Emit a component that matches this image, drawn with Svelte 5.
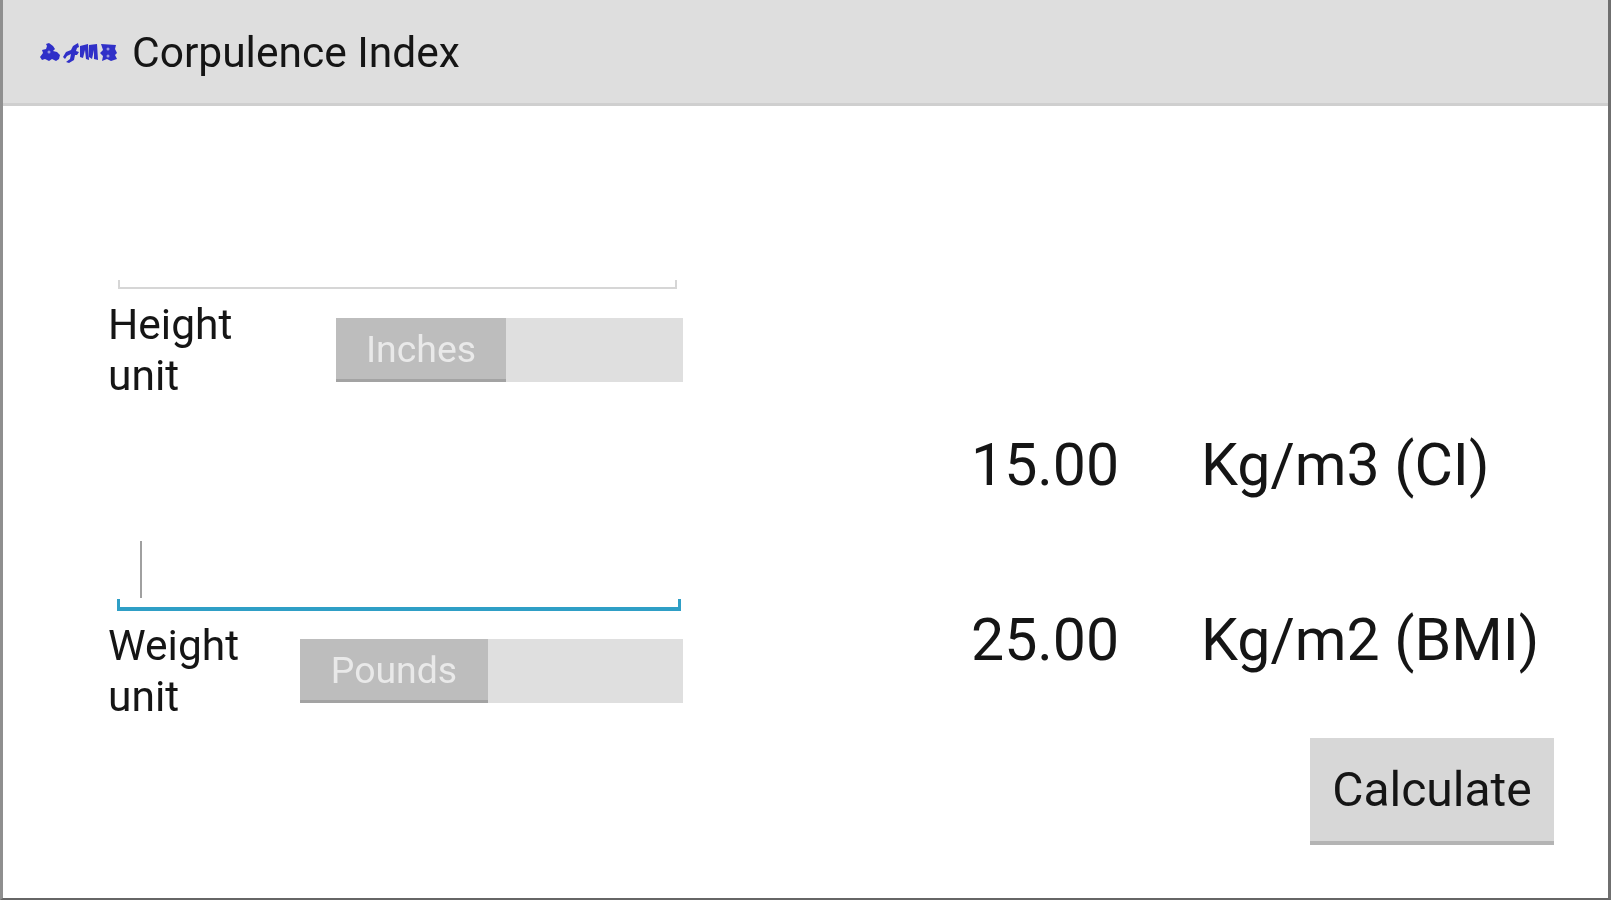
<script>
  const fields = [
    { id: 'height', label: ['Height', 'unit'], value: 'Inches', active: false },
    { id: 'weight', label: ['Weight', 'unit'], value: 'Pounds', active: true }
  ];
  const results = [
    { value: '15.00', unit: 'Kg/m3 (CI)' },
    { value: '25.00', unit: 'Kg/m2 (BMI)' }
  ];
</script>

<div class="screen">
  <header class="bar">
    <svg class="logo" width="80" height="24" viewBox="0 0 80 24" aria-hidden="true">
      <g fill="#3030c8">
        <path d="M10 2l4 3 2 3-2 2 4 1 3 3-1 4-3 2-4-2-3 2-4-2-3 1-2-3 3-4-1-3 4-1 1-3-1-2z" />
        <path d="M34 5l5-3 1 4-2 1-1 3 3 1-2 3h-2l-1 5-5 3-3-1 4-3 1-5-4 2-2 3-2-2 3-5 5-2z" />
        <path d="M41 5l8-2 1 16-3-1-1-9-2 8-3-1z" />
        <path d="M50 4l8-1 1 16-4-1v-9l-2 9-3-2z" />
        <path d="M62 3l15 1-1 4 2 4-2 2 2 4-6 2-4-2-5 2 1-5-3-3 3-3z" />
      </g>
      <g fill="#9a9ae0">
        <circle cx="10" cy="11" r="1.5" />
        <circle cx="69" cy="8" r="1.5" />
        <circle cx="69" cy="15" r="1.5" />
      </g>
    </svg>
    <h1>Corpulence Index</h1>
  </header>

  <main class="content">
    <section class="inputs">
      {#each fields as field}
        <div class="field {field.id}">
          <div class="input" class:active={field.active}>
            {#if field.active}<span class="caret"></span>{/if}
          </div>
          <div class="row">
            <div class="label">{field.label[0]}<br />{field.label[1]}</div>
            <div class="toggle">
              <div class="thumb">{field.value}</div>
            </div>
          </div>
        </div>
      {/each}
    </section>

    <section class="outputs">
      <div class="results">
        {#each results as r}
          <div class="result">
            <span class="num">{r.value}</span>
            <span class="unit">{r.unit}</span>
          </div>
        {/each}
      </div>
      <button class="calc">Calculate</button>
    </section>
  </main>
</div>

<style>
  :global(body) {
    margin: 0;
    background: #fff;
  }
  .screen {
    box-sizing: border-box;
    width: 1611px;
    height: 900px;
    display: flex;
    flex-direction: column;
    border-left: 3px solid #8f8f8f;
    border-right: 3px solid #6f6f6f;
    border-bottom: 2px solid #666;
    font-family: Roboto, "Liberation Sans", sans-serif;
    color: #151515;
    background: #fff;
    overflow: hidden;
    filter: blur(0.7px);
  }
  .bar {
    flex: none;
    height: 106px;
    box-sizing: border-box;
    display: flex;
    align-items: center;
    gap: 13px;
    padding: 3px 0 0 36px;
    background: #dedede;
    border-bottom: 3px solid #cfcfcf;
  }
  .logo {
    display: block;
    filter: blur(0.7px);
  }
  h1 {
    margin: 0;
    font-size: 42.5px;
    font-weight: 400;
    line-height: 1;
  }
  .content {
    flex: 1;
    display: flex;
    min-height: 0;
  }
  .inputs {
    width: 680px;
    flex: none;
    padding: 174px 0 0 105px;
    box-sizing: border-box;
  }
  .field.weight {
    margin-top: 198px;
  }
  .input {
    box-sizing: border-box;
    position: relative;
    width: 559px;
    height: 9px;
    margin-left: 10px;
    border: 2px solid #d6d6d6;
    border-top: 0;
  }
  .input.active {
    width: 564px;
    height: 12px;
    margin-left: 9px;
    border-color: #2f9fc6;
    border-bottom-width: 4px;
    border-left-width: 3px;
    border-right-width: 3px;
  }
  .caret {
    position: absolute;
    left: 20px;
    bottom: 9px;
    width: 2px;
    height: 57px;
    background: #a0a0a0;
  }
  .row {
    display: flex;
    justify-content: space-between;
    align-items: center;
    width: 575px;
    margin-top: 10px;
  }
  .weight .row {
    margin-top: 9px;
  }
  .label {
    font-size: 42.5px;
    line-height: 51px;
  }
  .toggle {
    height: 64px;
    background: #dfdfdf;
    display: flex;
  }
  .height .toggle { width: 347px; }
  .weight .toggle { width: 383px; }
  .thumb {
    box-sizing: border-box;
    height: 100%;
    display: flex;
    align-items: center;
    justify-content: center;
    background: #bdbdbd;
    border-bottom: 3px solid #a3a3a3;
    color: #e9e9e9;
    font-size: 37.4px;
  }
  .height .thumb { width: 170px; }
  .weight .thumb { width: 188px; }
  .outputs {
    flex: 1;
    display: flex;
    flex-direction: column;
    align-items: flex-end;
    padding-right: 54px;
  }
  .results {
    align-self: flex-start;
    margin: 325px 0 0 288px;
    display: flex;
    flex-direction: column;
    gap: 108px;
  }
  .result {
    display: flex;
    align-items: center;
    height: 67px;
    font-size: 59px;
    white-space: nowrap;
  }
  .num {
    width: 230px;
  }
  .calc {
    margin-top: 65px;
    width: 244px;
    height: 107px;
    box-sizing: border-box;
    padding: 0;
    border: 0;
    border-bottom: 4px solid #b4b4b4;
    background: #d7d7d7;
    color: #151515;
    font: 400 48px Roboto, "Liberation Sans", sans-serif;
  }
</style>
